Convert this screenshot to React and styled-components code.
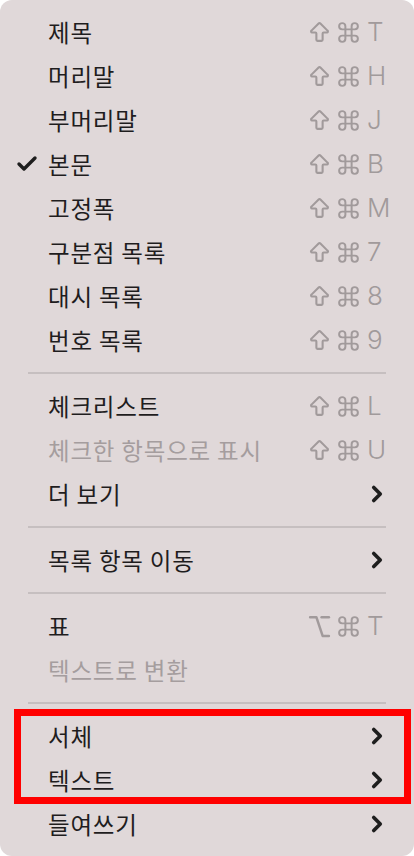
import React from "react";
import styled, { createGlobalStyle } from "styled-components";
import { ArrowBigUp, Command, Option, ChevronRight, Check } from "lucide-react";

const Global = createGlobalStyle`
  html, body { margin: 0; padding: 0; background: #ffffff; }
  body { width: 414px; height: 856px; overflow: hidden; }
`;

const sections = [
  [
    { label: "제목", keys: ["shift", "cmd", "T"] },
    { label: "머리말", keys: ["shift", "cmd", "H"] },
    { label: "부머리말", keys: ["shift", "cmd", "J"] },
    { label: "본문", keys: ["shift", "cmd", "B"], checked: true },
    { label: "고정폭", keys: ["shift", "cmd", "M"] },
    { label: "구분점 목록", keys: ["shift", "cmd", "7"] },
    { label: "대시 목록", keys: ["shift", "cmd", "8"] },
    { label: "번호 목록", keys: ["shift", "cmd", "9"] },
  ],
  [
    { label: "체크리스트", keys: ["shift", "cmd", "L"] },
    { label: "체크한 항목으로 표시", keys: ["shift", "cmd", "U"], disabled: true },
    { label: "더 보기", sub: true },
  ],
  [{ label: "목록 항목 이동", sub: true }],
  [
    { label: "표", keys: ["opt", "cmd", "T"] },
    { label: "텍스트로 변환", disabled: true },
  ],
];

function Key({ k }) {
  if (k === "shift") return <Mod><ArrowBigUp size={25} strokeWidth={2} /></Mod>;
  if (k === "cmd") return <Mod><Command size={25} strokeWidth={1.9} /></Mod>;
  if (k === "opt") return <Mod><Option size={25} strokeWidth={2.4} /></Mod>;
  return <Letter>{k}</Letter>;
}

function Item({ item }) {
  return (
    <Row>
      <Tick>{item.checked && <Check size={24} strokeWidth={3.4} />}</Tick>
      <Label $disabled={item.disabled}>{item.label}</Label>
      {item.keys && (
        <Shortcut>
          {item.keys.map((k, i) => <Key key={i} k={k} />)}
        </Shortcut>
      )}
      {item.sub && <Arrow><ChevronRight size={26} strokeWidth={3.4} /></Arrow>}
    </Row>
  );
}

export default function App() {
  return (
    <>
      <Global />
      <Menu>
        {sections.map((sec, i) => (
          <React.Fragment key={i}>
            {sec.map((item) => <Item key={item.label} item={item} />)}
            <Separator />
          </React.Fragment>
        ))}
        <Highlight>
          <Item item={{ label: "서체", sub: true }} />
          <Item item={{ label: "텍스트", sub: true }} />
        </Highlight>
        <Item item={{ label: "들여쓰기", sub: true }} />
      </Menu>
    </>
  );
}

const Menu = styled.div`
  width: 414px;
  height: 856px;
  box-sizing: border-box;
  padding: 10px 0;
  background: #e0d8d9;
  border-radius: 12px;
  font-family: "Noto Sans CJK KR", "Noto Sans", sans-serif;
`;

const Row = styled.div`
  display: grid;
  grid-template-columns: 48px 1fr auto;
  align-items: center;
  height: 44px;
  padding-right: 31px;
`;

const Tick = styled.div`
  display: flex;
  justify-content: flex-end;
  padding-right: 9px;
  color: #1e1e1e;
`;

const Label = styled.span`
  font-size: 23.5px;
  letter-spacing: 0.8px;
  line-height: 1;
  color: ${(p) => (p.$disabled ? "#a59d9e" : "#1f1d1e")};
  padding-top: 2px;
`;

const Shortcut = styled.div`
  display: flex;
  align-items: center;
  gap: 4px;
  color: #a19a9b;
`;

const Mod = styled.span`
  display: flex;
  align-items: center;
`;

const Letter = styled.span`
  font-family: Inter, "Liberation Sans", sans-serif;
  font-weight: 300;
  font-size: 26px;
  line-height: 1;
  width: 16px;
  margin-left: 2px;
  white-space: nowrap;
`;

const Arrow = styled.span`
  display: flex;
  color: #1e1e1e;
  margin-right: -7px;
`;

const Separator = styled.div`
  height: 22px;
  display: flex;
  align-items: center;
  padding: 0 28px;
  &::before {
    content: "";
    flex: 1;
    height: 2px;
    background: #c6bfc0;
  }
`;

const Highlight = styled.div`
  position: relative;
  &::after {
    content: "";
    position: absolute;
    left: 14px;
    right: 3px;
    top: -5px;
    bottom: -2px;
    border: 7px solid #ff0000;
    pointer-events: none;
  }
`;
